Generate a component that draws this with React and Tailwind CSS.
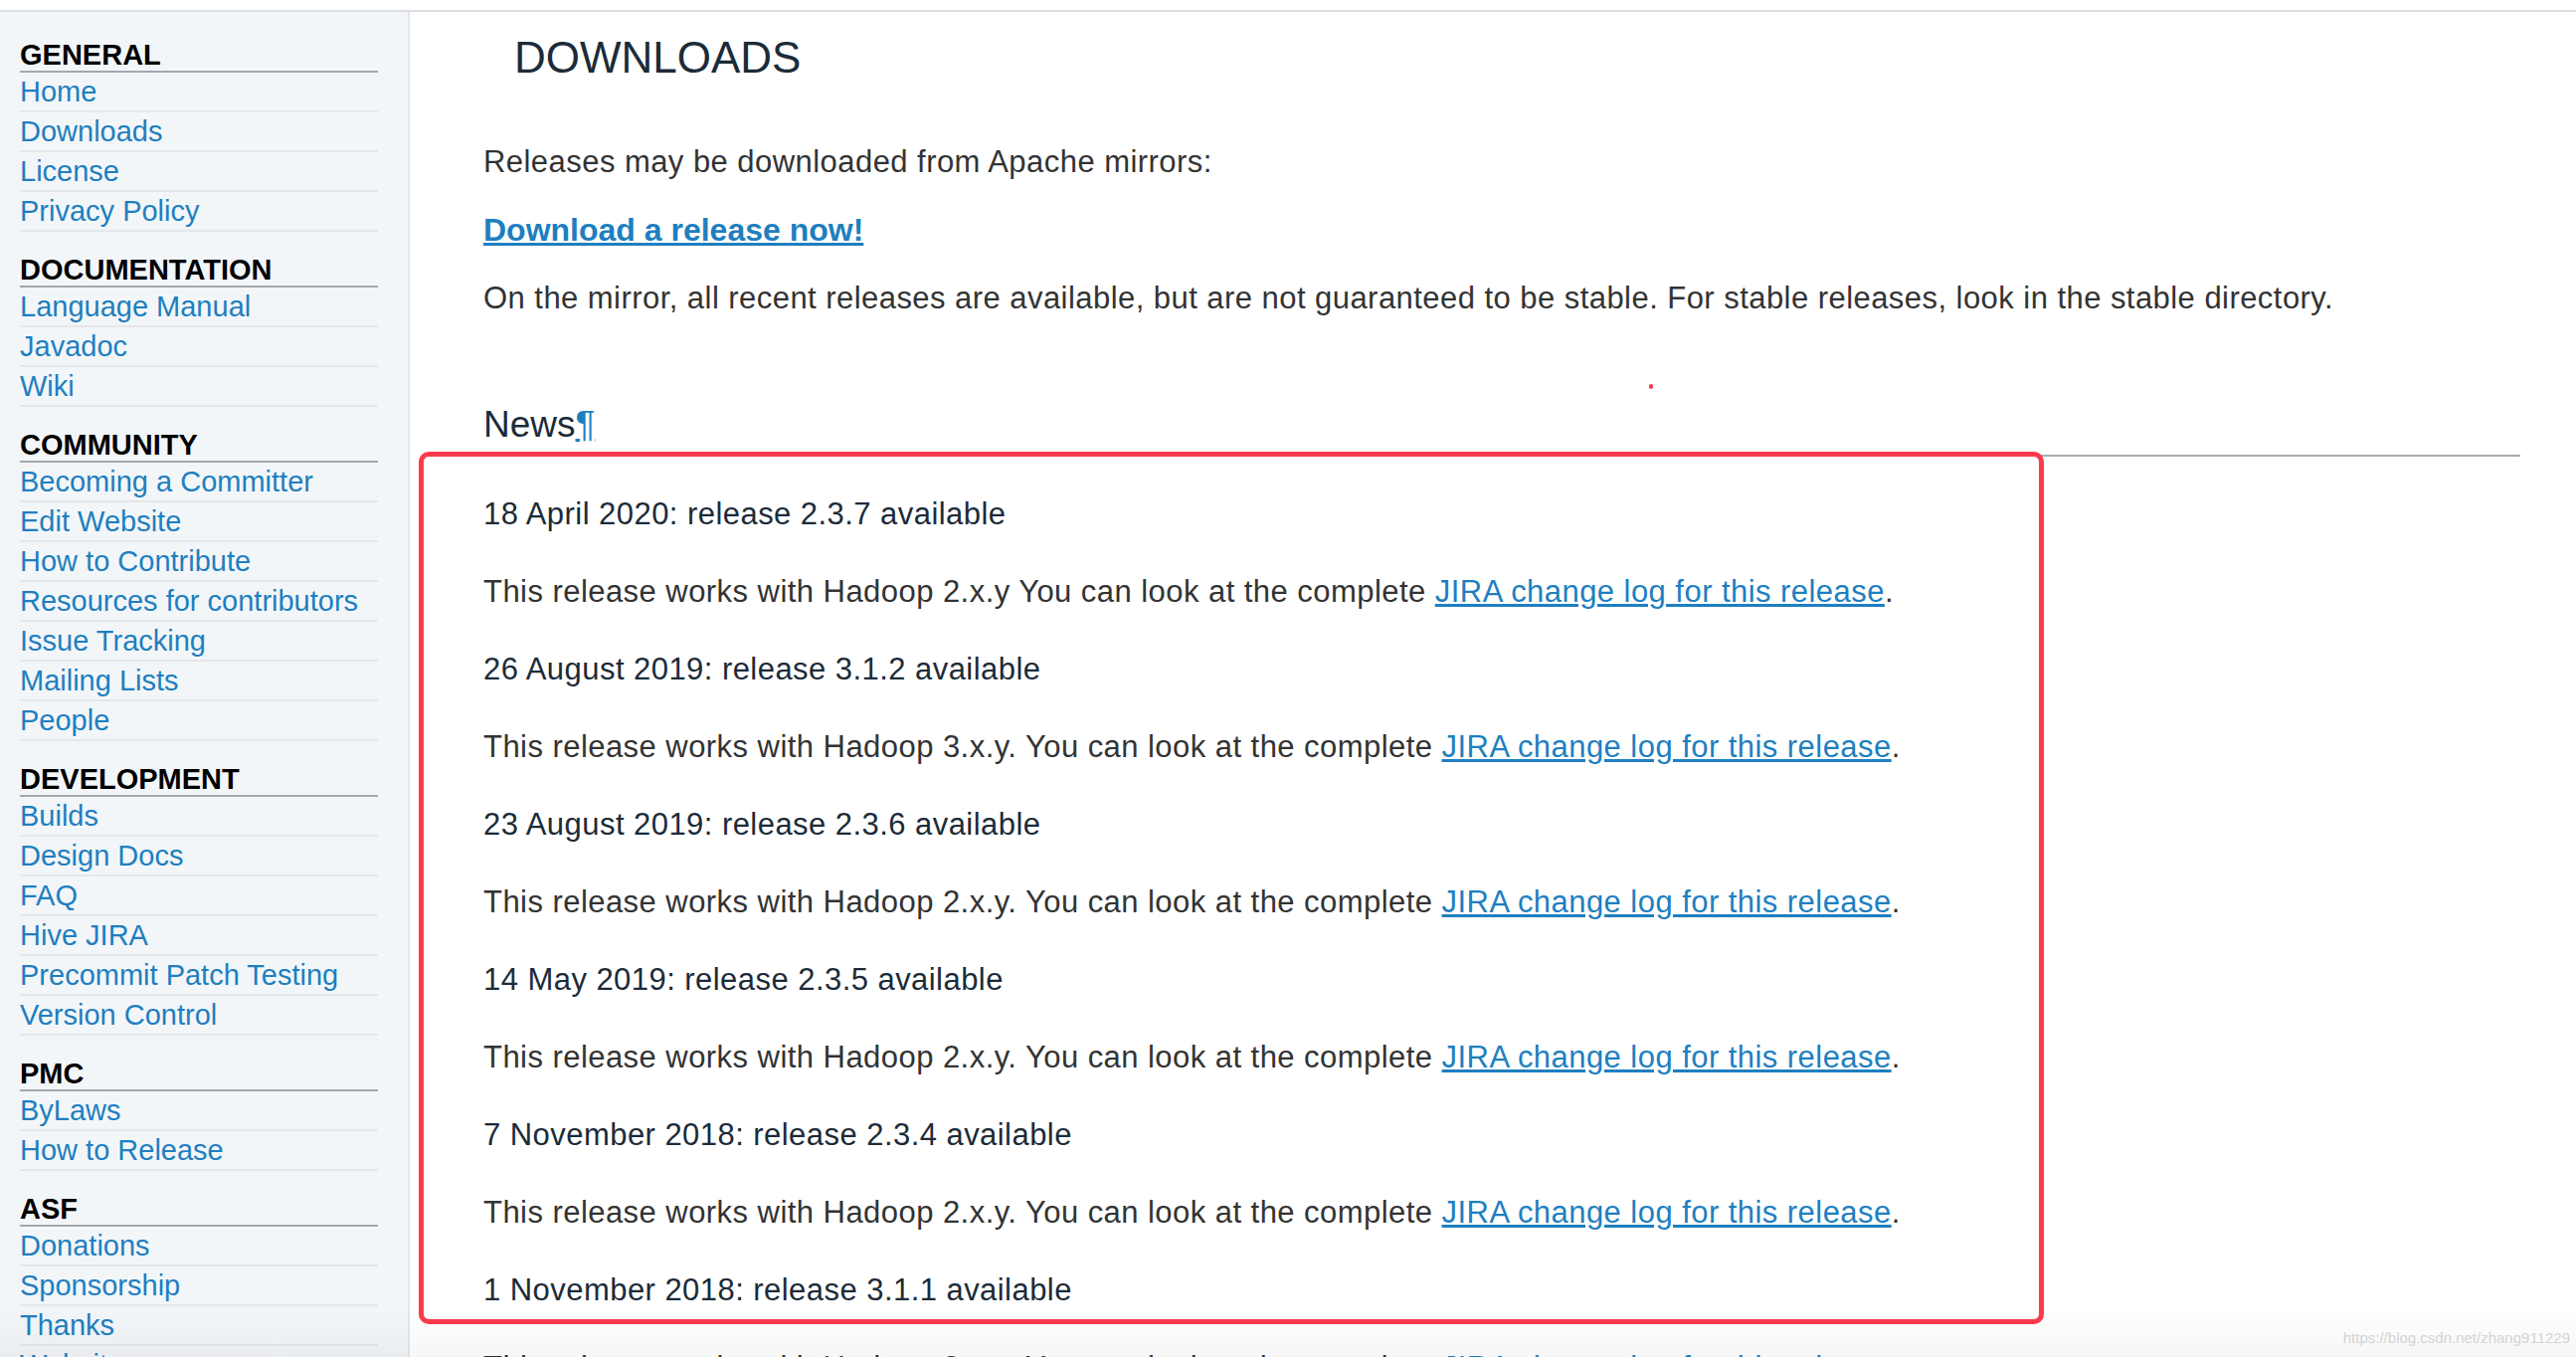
import React from "react";

const sections = [
  { title: "GENERAL", links: ["Home", "Downloads", "License", "Privacy Policy"] },
  { title: "DOCUMENTATION", links: ["Language Manual", "Javadoc", "Wiki"] },
  {
    title: "COMMUNITY",
    links: [
      "Becoming a Committer",
      "Edit Website",
      "How to Contribute",
      "Resources for contributors",
      "Issue Tracking",
      "Mailing Lists",
      "People",
    ],
  },
  {
    title: "DEVELOPMENT",
    links: ["Builds", "Design Docs", "FAQ", "Hive JIRA", "Precommit Patch Testing", "Version Control"],
  },
  { title: "PMC", links: ["ByLaws", "How to Release"] },
  { title: "ASF", links: ["Donations", "Sponsorship", "Thanks", "Website"] },
];

const news = [
  { date: "18 April 2020: release 2.3.7 available", hadoop: "2.x.y" },
  { date: "26 August 2019: release 3.1.2 available", hadoop: "3.x.y." },
  { date: "23 August 2019: release 2.3.6 available", hadoop: "2.x.y." },
  { date: "14 May 2019: release 2.3.5 available", hadoop: "2.x.y." },
  { date: "7 November 2018: release 2.3.4 available", hadoop: "2.x.y." },
  { date: "1 November 2018: release 3.1.1 available", hadoop: "3.x.y." },
];

const Sidebar = () => {
  return (
    <aside className="w-[412px] shrink-0 bg-[#f3f6f9] border-r-2 border-[#e3e7eb] pl-[20px] pt-[5px]">
      <div className="w-[360px]">
        {sections.map((section) => (
          <div key={section.title}>
            <h3 className="mt-[22px] h-[34px] leading-[32px] text-[29px] font-bold text-black border-b-2 border-[#a2a8ae]">
              {section.title}
            </h3>
            {section.links.map((link) => (
              <div
                key={link}
                className="h-[40px] leading-[38px] text-[29px] text-[#1e7fc0] border-b-2 border-[#e4e8ec] whitespace-nowrap"
              >
                <a href="#">{link}</a>
              </div>
            ))}
          </div>
        ))}
      </div>
    </aside>
  );
};

const JiraLine = ({ hadoop }) => (
  <p className="mt-[38px] h-[40px] leading-[40px] text-[#333333] whitespace-nowrap">
    This release works with Hadoop {hadoop} You can look at the complete{" "}
    <a href="#" className="text-[#1e7fc0] underline">
      JIRA change log for this release
    </a>
    .
  </p>
);

export default function App() {
  return (
    <div className="relative w-[2590px] h-[1364px] overflow-hidden bg-white font-['Liberation_Sans',Arial,sans-serif]">
      <div className="h-[10px] bg-white border-b-2 border-[#dcdee2] box-content" />
      <div className="flex h-[1352px]">
        <Sidebar />
        <main className="flex-1 pl-[74px] pr-[56px] text-[31px] tracking-[0.45px]">
          <h1 className="mt-[21px] h-[50px] leading-[50px] pl-[31px] text-[44px] tracking-normal text-[#1c2b39]">
            DOWNLOADS
          </h1>
          <p className="mt-[60px] h-[40px] leading-[40px] text-[#333333]">
            Releases may be downloaded from Apache mirrors:
          </p>
          <p className="mt-[28px] h-[40px] leading-[40px] text-[32px] font-bold tracking-normal">
            <a href="#" className="text-[#1e7fc0] underline">
              Download a release now!
            </a>
          </p>
          <p className="mt-[29px] h-[40px] leading-[40px] text-[#333333] whitespace-nowrap">
            On the mirror, all recent releases are available, but are not guaranteed to be stable. For stable
            releases, look in the stable directory.
          </p>
          <h2 className="mt-[85px] h-[54px] leading-[44px] pb-[8px] text-[37px] tracking-normal text-[#1c2b39] border-b-2 border-[#a5acb3] box-border">
            News
            <a href="#" className="text-[#1e7fc0] underline">
              ¶
            </a>
          </h2>
          <div className="mt-[3px]">
            {news.map((item) => (
              <div key={item.date}>
                <p className="mt-[38px] h-[40px] leading-[40px] text-[#1c2b39] whitespace-nowrap">{item.date}</p>
                <JiraLine hadoop={item.hadoop} />
              </div>
            ))}
          </div>
        </main>
      </div>

      {/* annotation box drawn over the news list */}
      <div className="absolute left-[421px] top-[454px] w-[1634px] h-[877px] border-[5px] border-[#fa3a4c] rounded-[10px] pointer-events-none" />
      <div className="absolute left-[1658px] top-[386px] w-[4px] h-[5px] rounded-full bg-[#fa3a4c]" />

      <div className="absolute left-0 right-0 bottom-0 h-[50px] bg-linear-to-b from-transparent to-black/[0.035] pointer-events-none" />
      <div className="absolute right-[6px] bottom-[8px] text-[15px] text-[#d4d4d4] whitespace-nowrap">
        https://blog.csdn.net/zhang911229
      </div>
    </div>
  );
}
